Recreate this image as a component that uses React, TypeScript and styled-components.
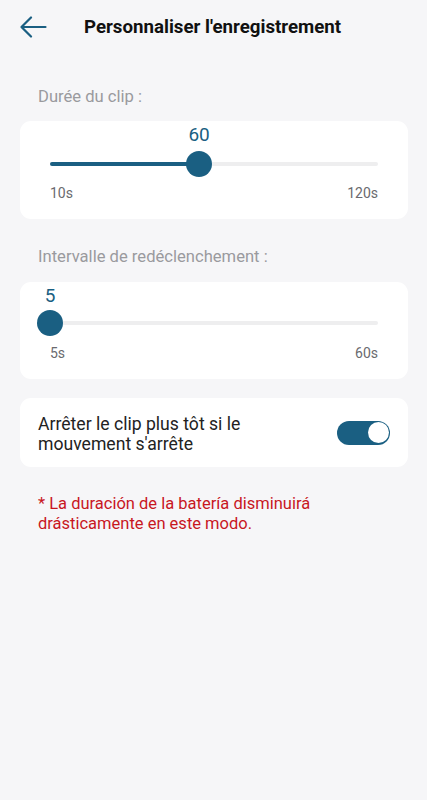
import React from "react";
import styled, { createGlobalStyle } from "styled-components";

const TEAL = "#1a5f82";

const Global = createGlobalStyle`
  html, body { margin: 0; padding: 0; background: #f6f6f8; }
  body { font-family: Roboto, "Noto Sans", "Liberation Sans", sans-serif; -webkit-font-smoothing: antialiased; }
  * { box-sizing: border-box; }
`;

const Page = styled.div`
  width: 427px;
  min-height: 800px;
  background: #f6f6f8;
  display: flex;
  flex-direction: column;
`;

const Header = styled.header`
  height: 54px;
  display: flex;
  align-items: center;
  padding-left: 18px;
`;

const BackButton = styled.button`
  width: 30px;
  height: 30px;
  padding: 0;
  border: none;
  background: transparent;
  display: flex;
  align-items: center;
  justify-content: center;
  cursor: pointer;
`;

const Title = styled.h1`
  margin: 0 0 0 36px;
  font-size: 18.7px;
  font-weight: 700;
  color: #111;
  letter-spacing: 0;
`;

const Content = styled.main`
  display: flex;
  flex-direction: column;
  padding: 0 19px 0 20px;
`;

const SectionLabel = styled.div<{ $top: number }>`
  margin-top: ${(p) => p.$top}px;
  padding-left: 18px;
  font-size: 16.6px;
  line-height: 20px;
  color: #9a9a9e;
`;

const Card = styled.section<{ $top: number }>`
  margin-top: ${(p) => p.$top}px;
  background: #fff;
  border-radius: 11px;
`;

const SliderCard = styled(Card)`
  padding: 2px 30px 17px 30px;
  display: flex;
  flex-direction: column;
`;

const ValueRow = styled.div`
  position: relative;
  height: 24px;
`;

const Value = styled.span`
  position: absolute;
  top: 0;
  transform: translateX(-50%);
  font-size: 19px;
  line-height: 24px;
  color: ${TEAL};
`;

const TrackRow = styled.div<{ $gap: number }>`
  position: relative;
  height: 26px;
  margin-top: ${(p) => p.$gap}px;
  display: flex;
  align-items: center;
`;

const Track = styled.div`
  position: relative;
  width: 100%;
  height: 4px;
  border-radius: 2px;
  background: #eeeeef;
`;

const Fill = styled.div`
  position: absolute;
  left: 0;
  top: 0;
  height: 4px;
  border-radius: 2px;
  background: ${TEAL};
`;

const Thumb = styled.div`
  position: absolute;
  top: 50%;
  width: 26px;
  height: 26px;
  border-radius: 50%;
  background: ${TEAL};
  transform: translate(-50%, -50%);
`;

const RangeLabels = styled.div<{ $gap: number }>`
  margin-top: ${(p) => p.$gap}px;
  display: flex;
  justify-content: space-between;
  font-size: 14px;
  line-height: 18px;
  color: #6a6a6e;
`;

const ToggleCard = styled(Card)`
  padding: 16px 18px 13px 18px;
  display: flex;
  align-items: center;
  justify-content: space-between;
`;

const ToggleText = styled.div`
  font-size: 17.6px;
  line-height: 20px;
  color: #222;
  width: 260px;
`;

const Switch = styled.div<{ $on: boolean }>`
  width: 53px;
  height: 24px;
  border-radius: 12px;
  background: ${(p) => (p.$on ? TEAL : "#ccc")};
  padding: 1.5px;
  display: flex;
  justify-content: ${(p) => (p.$on ? "flex-end" : "flex-start")};
  margin-top: -3px;
`;

const SwitchKnob = styled.div`
  width: 21px;
  height: 21px;
  border-radius: 50%;
  background: #fff;
`;

const Warning = styled.p`
  margin: 27px 0 0 0;
  padding-left: 18px;
  font-size: 16.5px;
  line-height: 20px;
  color: #c8171f;
`;

type SliderProps = {
  min: number;
  max: number;
  value: number;
  minLabel: string;
  maxLabel: string;
  trackGap: number;
  labelGap: number;
};

function Slider({ min, max, value, minLabel, maxLabel, trackGap, labelGap }: SliderProps) {
  const pct = ((value - min) / (max - min)) * 100;
  return (
    <>
      <ValueRow>
        <Value style={{ left: `${pct}%` }}>{value}</Value>
      </ValueRow>
      <TrackRow $gap={trackGap}>
        <Track>
          <Fill style={{ width: `${pct}%` }} />
          <Thumb style={{ left: `${pct}%` }} />
        </Track>
      </TrackRow>
      <RangeLabels $gap={labelGap}>
        <span>{minLabel}</span>
        <span>{maxLabel}</span>
      </RangeLabels>
    </>
  );
}

export default function App() {
  return (
    <Page>
      <Global />
      <Header>
        <BackButton aria-label="Retour">
          <svg width="28" height="22" viewBox="0 0 28 22" fill="none">
            <path d="M26.5 11H2.5M12 1.5L2.5 11L12 20.5" stroke={TEAL} strokeWidth="2.2" strokeLinecap="round" strokeLinejoin="round" />
          </svg>
        </BackButton>
        <Title>Personnaliser l'enregistrement</Title>
      </Header>
      <Content>
        <SectionLabel $top={33}>Durée du clip :</SectionLabel>
        <SliderCard $top={14}>
          <Slider min={10} max={120} value={60} minLabel="10s" maxLabel="120s" trackGap={4} labelGap={7} />
        </SliderCard>
        <SectionLabel $top={28}>Intervalle de redéclenchement :</SectionLabel>
        <SliderCard $top={15}>
          <Slider min={5} max={60} value={5} minLabel="5s" maxLabel="60s" trackGap={2} labelGap={8} />
        </SliderCard>
        <ToggleCard $top={19}>
          <ToggleText>Arrêter le clip plus tôt si le mouvement s'arrête</ToggleText>
          <Switch $on={true}>
            <SwitchKnob />
          </Switch>
        </ToggleCard>
        <Warning>
          * La duración de la batería disminuirá
          <br />
          drásticamente en este modo.
        </Warning>
      </Content>
    </Page>
  );
}
